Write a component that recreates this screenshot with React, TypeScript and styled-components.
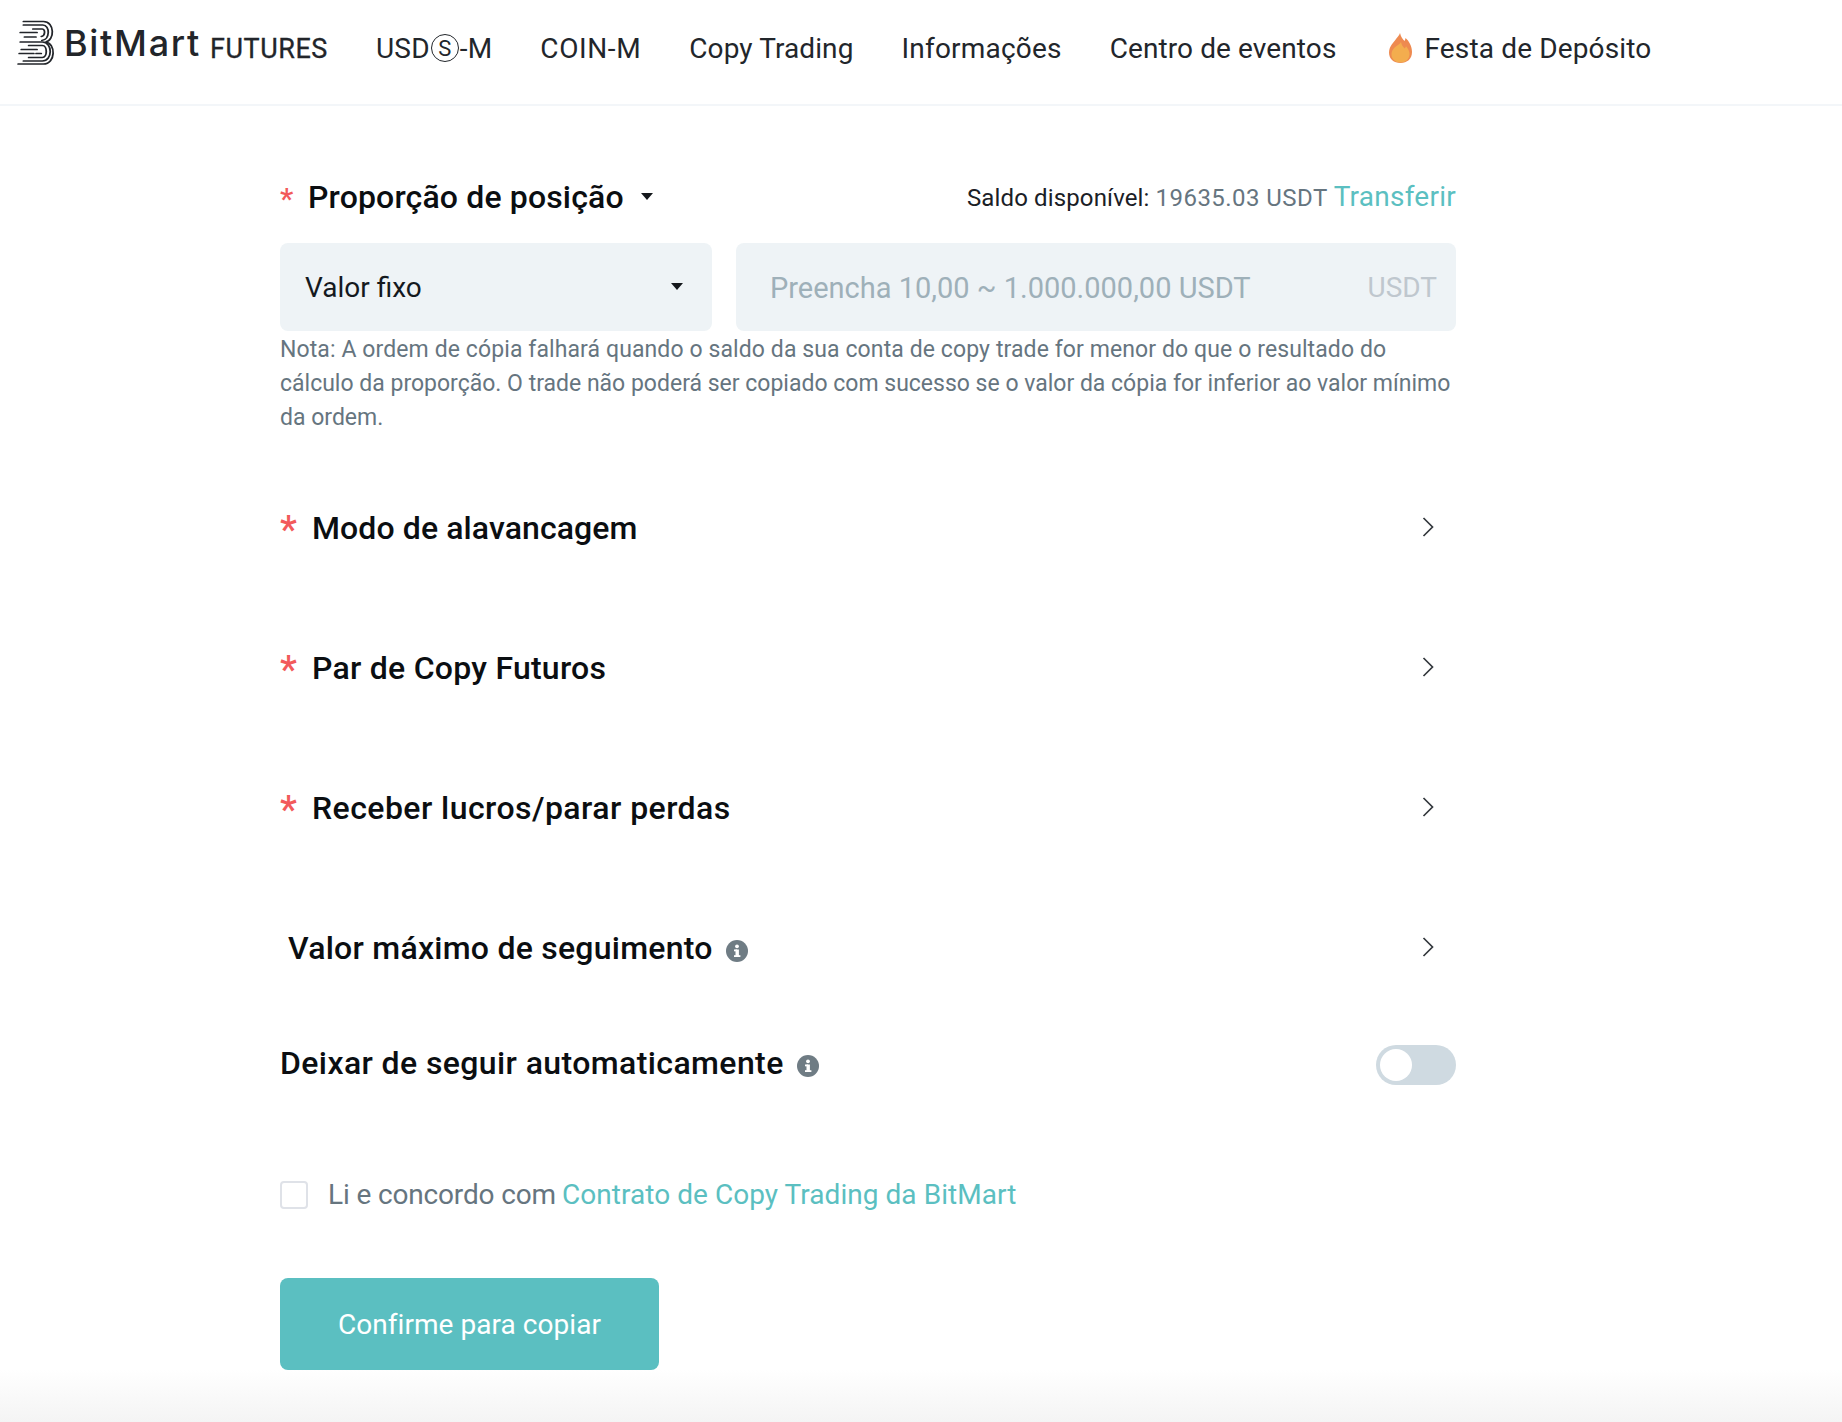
import React from 'react';
import styled, { createGlobalStyle } from 'styled-components';

const GlobalStyle = createGlobalStyle`
  html, body {
    margin: 0;
    padding: 0;
    background: #fff;
  }
  body {
    font-family: 'Roboto', 'Noto Sans', sans-serif;
    color: #1a2026;
  }
  * {
    box-sizing: border-box;
  }
`;

const Page = styled.div`
  width: 1842px;
  height: 1422px;
  overflow: hidden;
  display: flex;
  flex-direction: column;
`;

const TopBar = styled.header`
  height: 106px;
  flex-shrink: 0;
  display: flex;
  align-items: center;
  padding: 0 0 8px 16px;
  border-bottom: 2px solid #f3f6f9;
`;

const LogoBox = styled.div`
  display: flex;
  align-items: center;
  width: 360px;
  margin-bottom: 10px;
`;

const LogoName = styled.span`
  margin-left: 8px;
  font-family: 'Inter', sans-serif;
  font-size: 36px;
  font-weight: 500;
  letter-spacing: 1.7px;
  color: #22252a;
`;

const LogoTag = styled.span`
  margin-left: 9px;
  margin-top: 12px;
  font-size: 27px;
  font-weight: 400;
  letter-spacing: 0.55px;
  color: #22252a;
  -webkit-text-stroke: 0.3px #22252a;
`;

const Nav = styled.nav`
  display: flex;
  align-items: center;
  gap: 48px;
`;

const NavLink = styled.a<{ $spacing?: number }>`
  display: flex;
  align-items: center;
  font-size: 28px;
  color: #22262b;
  white-space: nowrap;
  letter-spacing: ${p => p.$spacing ?? 0.2}px;
`;

const CircleS = styled.span`
  display: inline-flex;
  align-items: center;
  justify-content: center;
  width: 28px;
  height: 28px;
  margin: 0 1px;
  border: 1.5px solid #22262b;
  border-radius: 50%;
  font-size: 22px;
  letter-spacing: 0;
`;

const Flame = styled.svg`
  margin: 0 11px 0 5px;
`;

const Form = styled.main`
  flex: 1;
  width: 1176px;
  margin-left: 280px;
  display: flex;
  flex-direction: column;
`;

const PositionHead = styled.div`
  height: 137px;
  padding: 56px 0 12px;
  display: flex;
  justify-content: space-between;
  align-items: center;
`;

const TitleGroup = styled.div`
  display: flex;
  align-items: center;
`;

const Star = styled.span<{ $wide?: boolean }>`
  color: #f25a5a;
  font-size: ${p => (p.$wide ? '38px' : '30px')};
  font-weight: 500;
  width: ${p => (p.$wide ? '32px' : '28px')};
  line-height: 1;
  padding-top: 4px;
`;

const Title = styled.span<{ $spacing?: number }>`
  font-size: 32px;
  font-weight: 500;
  color: #0b0e11;
  letter-spacing: ${p => p.$spacing ?? 0.15}px;
  white-space: nowrap;
`;

const Caret = styled.i<{ $left?: number; $lift?: number }>`
  display: block;
  width: 0;
  height: 0;
  margin-left: ${p => p.$left ?? 0}px;
  margin-bottom: ${p => p.$lift ?? 0}px;
  border-left: 6.5px solid transparent;
  border-right: 6.5px solid transparent;
  border-top: 7px solid #14181c;
`;

const Balance = styled.div`
  display: flex;
  align-items: baseline;
  font-size: 24px;
  letter-spacing: 0.14px;
  color: #1a2026;
  white-space: nowrap;
`;

const BalanceValue = styled.span`
  color: #66757f;
  margin-left: 6px;
  letter-spacing: 0.45px;
`;

const TransferLink = styled.a`
  color: #5bbfc1;
  font-size: 28px;
  margin-left: 6px;
  letter-spacing: 0.25px;
`;

const FieldRow = styled.div`
  display: flex;
  gap: 24px;
  height: 88px;
`;

const SelectBox = styled.div`
  width: 432px;
  display: flex;
  align-items: center;
  justify-content: space-between;
  padding: 0 29px 0 25px;
  background: #eef3f6;
  border-radius: 8px;
  font-size: 28px;
  color: #14191e;
`;

const AmountBox = styled.div`
  flex: 1;
  display: flex;
  align-items: center;
  justify-content: space-between;
  padding: 0 19px 0 34px;
  background: #eef3f6;
  border-radius: 8px;
  font-size: 28px;
`;

const Placeholder = styled.span`
  color: #9eb0b9;
  font-size: 29px;
  padding-top: 2px;
`;

const Unit = styled.span`
  color: #bfc7ce;
`;

const Note = styled.div`
  margin: 2px 0 0;
  font-size: 23px;
  line-height: 34px;
  color: #66757f;
  height: 126px;
`;

const NoteLine = styled.div<{ $spacing?: number }>`
  white-space: nowrap;
  letter-spacing: ${p => p.$spacing ?? 0}px;
`;

const CollapseRow = styled.div`
  height: 140px;
  display: flex;
  align-items: center;
  justify-content: space-between;
  padding: 0 22px 2px 0;
`;

const RowLabel = styled.div<{ $indent?: number }>`
  display: flex;
  align-items: center;
  padding-left: ${p => p.$indent ?? 0}px;
`;

const InfoIcon = styled.svg`
  margin-left: 13px;
  margin-top: 6px;
`;

const ChevronIcon = styled.svg`
  margin-bottom: 2px;
`;

const SwitchRow = styled.div`
  height: 88px;
  display: flex;
  align-items: center;
  justify-content: space-between;
`;

const Toggle = styled.div`
  width: 80px;
  height: 40px;
  margin-top: 4px;
  border-radius: 20px;
  background: #cfdae1;
  padding: 4px;
`;

const ToggleKnob = styled.div`
  width: 32px;
  height: 32px;
  border-radius: 50%;
  background: #fff;
`;

const AgreeRow = styled.div`
  margin-top: 65px;
  display: flex;
  align-items: center;
  height: 44px;
  font-size: 28px;
  letter-spacing: -0.15px;
  color: #66757f;
`;

const CheckBox = styled.span`
  width: 28px;
  height: 28px;
  margin: 2px 20px 0 0;
  border: 2px solid #dfe2e8;
  border-radius: 4px;
  background: #fff;
`;

const AgreeLink = styled.a`
  color: #5bbfc1;
  margin-left: 6px;
  letter-spacing: 0.05px;
`;

const ConfirmButton = styled.button`
  margin-top: 62px;
  width: 379px;
  height: 92px;
  border: none;
  border-radius: 8px;
  background: #5bbfc1;
  color: #fff;
  font-family: inherit;
  font-size: 28px;
  letter-spacing: 0.05px;
`;

const BottomFade = styled.div`
  height: 52px;
  flex-shrink: 0;
  background: linear-gradient(#ffffff, #f4f4f4);
`;

const Spacer = styled.div`
  flex: 1;
`;

const BitMartMark = () => (
  <svg width="40" height="46" viewBox="0 0 38 46" preserveAspectRatio="none" fill="none" stroke="#22252a" strokeWidth="1.7" strokeLinecap="round">
    <path d="M7 1.500h19c11 0 11 19 2 20.500c10 1 10 22-2 22H2" />
    <path d="M7 5h18.500c7 0 7 15 -1 15.500" />
    <path d="M16 9h9c3 0 3 7-1 7.500" />
    <path d="M4 12.500h16" />
    <path d="M8 17h11" />
    <path d="M4 22h21c10 0 10 19 0 19H7" />
    <path d="M12 25.500h13c5 0 5 12 0 12H12" />
    <path d="M5 29.500h15" />
    <path d="M3 33.500h14" />
    <path d="M19 33.500h5" />
  </svg>
);

const FlameIcon = () => (
  <Flame width="24" height="32" viewBox="0 0 24 32">
    <path d="M11 1c1 4 2.500 6 4.500 8c.6-1 .9-1.800 1-3c3.500 3 6.500 8 6.500 14c0 7-5 11-11.500 11S0 27 0 20.500C0 14 5 10 7 7c1.500-2 3.500-4 4-6z" fill="#ee8a50" />
    <path d="M12 10c.5 3 2 4.500 3.500 6.500c.7-.6 1.200-1.300 1.500-2.300c2 2.300 3.500 4.800 3.500 7.800c0 5-4 8.500-9 8.500s-9-3.500-9-8c0-4 2.500-6.500 5-8.500c2-1.500 4-2.500 4.500-4z" fill="#f3ad4e" />
  </Flame>
);

const Info = () => (
  <InfoIcon width="22" height="22" viewBox="0 0 22 22">
    <circle cx="11" cy="11" r="11" fill="#6f7c84" />
    <rect x="9.500" y="9.500" width="3.400" height="7" fill="#fff" />
    <rect x="8" y="9.500" width="3" height="1.800" fill="#fff" />
    <rect x="8" y="15.200" width="6.400" height="1.800" fill="#fff" />
    <circle cx="11" cy="6.300" r="1.900" fill="#fff" />
  </InfoIcon>
);

const Chevron = () => (
  <ChevronIcon width="12" height="20" viewBox="0 0 12 20" fill="none" stroke="#33383d" strokeWidth="1.700">
    <path d="M1.500 1l9 9l-9 9" />
  </ChevronIcon>
);

const navItems = [
  { label: 'COIN-M', spacing: 0.6 },
  { label: 'Copy Trading', spacing: 0.1 },
  { label: 'Informações', spacing: 0.2 },
  { label: 'Centro de eventos', spacing: 0.1 },
];

const requiredRows = [
  { label: 'Modo de alavancagem', spacing: 0.1 },
  { label: 'Par de Copy Futuros', spacing: 0.25 },
  { label: 'Receber lucros/parar perdas', spacing: 0.45 },
];

const App: React.FC = () => {
  return (
    <Page>
      <GlobalStyle />
      <TopBar>
        <LogoBox>
          <BitMartMark />
          <LogoName>BitMart</LogoName>
          <LogoTag>FUTURES</LogoTag>
        </LogoBox>
        <Nav>
          <NavLink>
            USD<CircleS>S</CircleS>-M
          </NavLink>
          {navItems.map(item => (
            <NavLink key={item.label} $spacing={item.spacing}>
              {item.label}
            </NavLink>
          ))}
          <NavLink $spacing={0.15}>
            <FlameIcon />
            Festa de Depósito
          </NavLink>
        </Nav>
      </TopBar>
      <Form>
        <PositionHead>
          <TitleGroup>
            <Star>*</Star>
            <Title>Proporção de posição</Title>
            <Caret $left={17} />
          </TitleGroup>
          <Balance>
            Saldo disponível:
            <BalanceValue>19635.03 USDT</BalanceValue>
            <TransferLink>Transferir</TransferLink>
          </Balance>
        </PositionHead>
        <FieldRow>
          <SelectBox>
            Valor fixo
            <Caret $lift={2} />
          </SelectBox>
          <AmountBox>
            <Placeholder>Preencha 10,00 ~ 1.000.000,00 USDT</Placeholder>
            <Unit>USDT</Unit>
          </AmountBox>
        </FieldRow>
        <Note>
          <NoteLine $spacing={0.1}>
            Nota: A ordem de cópia falhará quando o saldo da sua conta de copy trade for menor do que o resultado do
          </NoteLine>
          <NoteLine>
            cálculo da proporção. O trade não poderá ser copiado com sucesso se o valor da cópia for inferior ao valor
            mínimo
          </NoteLine>
          <NoteLine>da ordem.</NoteLine>
        </Note>
        {requiredRows.map(row => (
          <CollapseRow key={row.label}>
            <RowLabel>
              <Star $wide>*</Star>
              <Title $spacing={row.spacing}>{row.label}</Title>
            </RowLabel>
            <Chevron />
          </CollapseRow>
        ))}
        <CollapseRow>
          <RowLabel $indent={8}>
            <Title $spacing={0.25}>Valor máximo de seguimento</Title>
            <Info />
          </RowLabel>
          <Chevron />
        </CollapseRow>
        <SwitchRow>
          <RowLabel>
            <Title $spacing={0.4}>Deixar de seguir automaticamente</Title>
            <Info />
          </RowLabel>
          <Toggle>
            <ToggleKnob />
          </Toggle>
        </SwitchRow>
        <AgreeRow>
          <CheckBox />
          Li e concordo com
          <AgreeLink>Contrato de Copy Trading da BitMart</AgreeLink>
        </AgreeRow>
        <ConfirmButton>Confirme para copiar</ConfirmButton>
        <Spacer />
      </Form>
      <BottomFade />
    </Page>
  );
};

export default App;
